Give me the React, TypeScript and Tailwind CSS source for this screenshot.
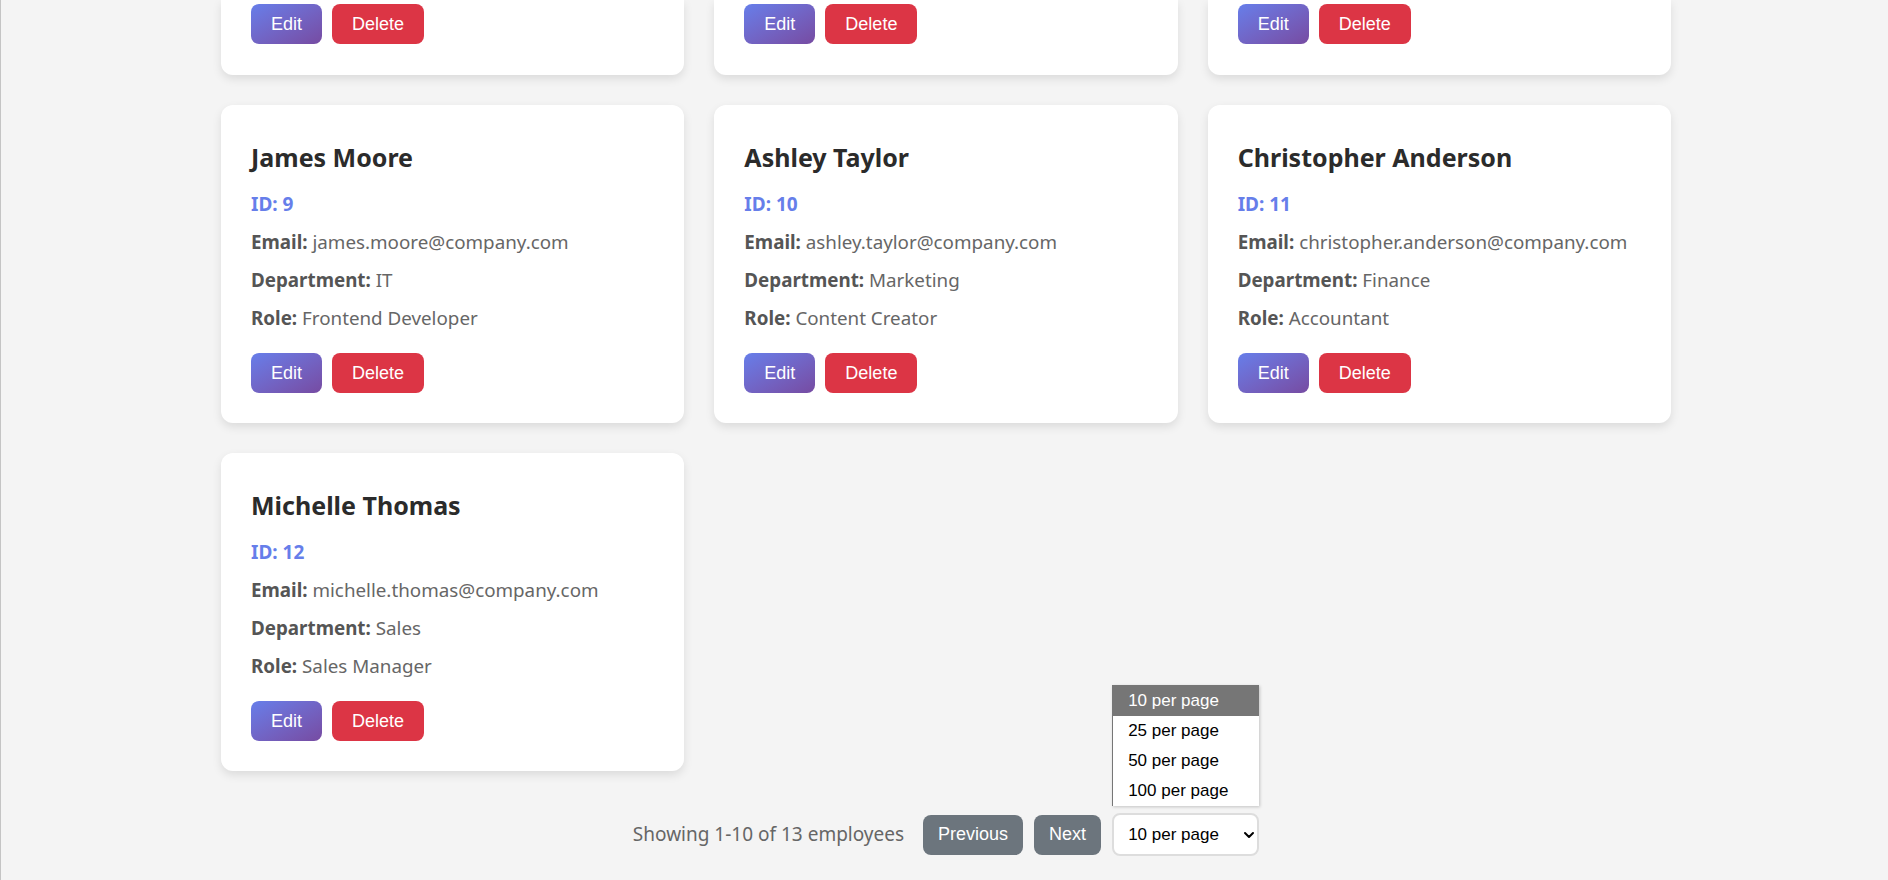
import { ChevronDown } from "lucide-react";

interface Employee {
    id: number;
    name: string;
    email: string;
    department: string;
    role: string;
}

const employees: Employee[] = [
    { id: 9, name: "James Moore", email: "james.moore@company.com", department: "IT", role: "Frontend Developer" },
    { id: 10, name: "Ashley Taylor", email: "ashley.taylor@company.com", department: "Marketing", role: "Content Creator" },
    { id: 11, name: "Christopher Anderson", email: "christopher.anderson@company.com", department: "Finance", role: "Accountant" },
    { id: 12, name: "Michelle Thomas", email: "michelle.thomas@company.com", department: "Sales", role: "Sales Manager" },
];

const pageSizes = [10, 25, 50, 100];

function CardActions() {
    return (
        <div className="flex gap-[10px] font-['Liberation_Sans',Arial,sans-serif]">
            <button className="h-10 px-5 rounded-lg text-[18px] text-white bg-gradient-to-br from-[#667eea] to-[#764ba2]">
                Edit
            </button>
            <button className="h-10 px-5 rounded-lg text-[18px] text-white bg-[#dc3545]">Delete</button>
        </div>
    );
}

function EmployeeCard({ employee }: { employee: Employee }) {
    return (
        <div className="bg-white rounded-xl p-[30px] shadow-[0_4px_10px_rgba(0,0,0,0.1)]">
            <h3 className="text-[25px] leading-[44px] font-bold text-[#2b2b2b] mb-[6px]">{employee.name}</h3>
            <p className="text-[19px] leading-[38px] font-bold text-[#667eea]">ID: {employee.id}</p>
            <p className="text-[18.8px] leading-[38px] text-[#666]">
                <strong className="text-[#555]">Email:</strong> {employee.email}
            </p>
            <p className="text-[18.8px] leading-[38px] text-[#666]">
                <strong className="text-[#555]">Department:</strong> {employee.department}
            </p>
            <p className="text-[18.8px] leading-[38px] text-[#666]">
                <strong className="text-[#555]">Role:</strong> {employee.role}
            </p>
            <div className="mt-4">
                <CardActions />
            </div>
        </div>
    );
}

export default function App() {
    return (
        <div className="h-[880px] overflow-hidden bg-[#f4f4f4] border-l border-[#c4c4c4] pl-[3px] font-['Noto_Sans',sans-serif]">
            <div className="grid grid-cols-3 gap-[30px] w-[1450px] mx-auto">
                {/* previous row, scrolled mostly out of view */}
                {[0, 1, 2].map((i) => (
                    <div key={i} className="bg-white rounded-b-xl px-[30px] pt-[4px] pb-[31px] shadow-[0_4px_10px_rgba(0,0,0,0.1)]">
                        <CardActions />
                    </div>
                ))}
                {employees.map((e) => (
                    <EmployeeCard key={e.id} employee={e} />
                ))}
            </div>

            {/* Pagination */}
            <div className="flex justify-center items-center gap-[11px] mt-[42px]">
                <span className="text-[19px] text-[#666] mr-[8px]">Showing 1-10 of 13 employees</span>
                <div className="flex gap-[11px] font-['Liberation_Sans',Arial,sans-serif]">
                    <button className="h-10 px-[15px] rounded-lg text-[18px] text-white bg-[#6c757d]">Previous</button>
                    <button className="h-10 px-[15px] rounded-lg text-[18px] text-white bg-[#6c757d]">Next</button>
                </div>
                <div className="relative font-['Liberation_Sans',Arial,sans-serif]">
                    {/* open native list */}
                    <div className="absolute bottom-full mb-[7px] left-0 w-[147px] bg-white border-l border-t border-[#767676] shadow-[1px_1px_3px_rgba(0,0,0,0.2)]">
                        {pageSizes.map((n) => (
                            <div
                                key={n}
                                className={`h-[30px] pl-[15px] flex items-center text-[17px] ${
                                    n === 10 ? "bg-[#767676] text-white" : "text-black"
                                }`}
                            >
                                {n} per page
                            </div>
                        ))}
                    </div>
                    <div className="w-[147px] h-[43px] bg-white border-2 border-[#ddd] rounded-lg flex items-center justify-between pl-[14px] pr-0 text-[17px] text-black">
                        <span>10 per page</span>
                        <ChevronDown size={16} strokeWidth={3} />
                    </div>
                </div>
            </div>
        </div>
    );
}
